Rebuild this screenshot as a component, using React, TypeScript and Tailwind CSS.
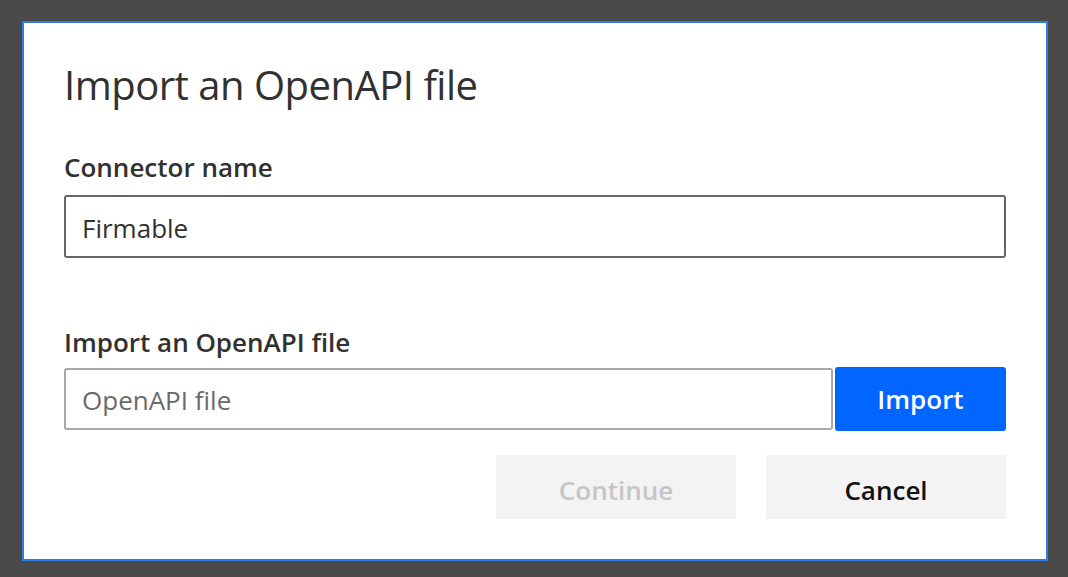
export default function App() {
  return (
    <div
      className="w-[1068px] h-[577px] bg-[#4a4a4a] pt-[21px] pl-[22px] overflow-hidden"
      style={{ fontFamily: '"Open Sans", "Noto Sans", Arial, sans-serif' }}
    >
      <div className="w-[1026px] h-[540px] bg-white border-2 border-[#2b7de9] px-[40px] flex flex-col">
        <h1 className="mt-[38px] text-[40px] leading-[48px] font-normal text-[#323130] tracking-[-0.5px]">
          Import an OpenAPI file
        </h1>

        <label className="mt-[42px] text-[26px] leading-[32px] font-semibold text-[#323130]">
          Connector name
        </label>
        <div className="mt-[12px] h-[63px] border-2 border-[#666666] rounded-[3px] flex items-center pl-[16px] pt-[3px] text-[26px] text-[#323130]">
          Firmable
        </div>

        <label className="mt-[68px] text-[26px] leading-[32px] font-semibold text-[#323130]">
          Import an OpenAPI file
        </label>
        <div className="mt-[9px] h-[64px] flex items-center gap-[2px]">
          <div className="flex-1 h-[62px] border-2 border-[#a8a8a8] rounded-[3px] flex items-center pl-[16px] pt-[3px] text-[26px] text-[#6b6a69]">
            OpenAPI file
          </div>
          <button className="w-[171px] h-[64px] bg-[#0066ff] rounded-[3px] text-white text-[26px] font-semibold">
            Import
          </button>
        </div>

        <div className="mt-[24px] flex justify-end gap-[30px]">
          <button className="w-[240px] h-[64px] pt-[6px] bg-[#f3f3f3] text-[#c6c6c6] text-[26px] font-semibold">
            Continue
          </button>
          <button className="w-[240px] h-[64px] pt-[6px] bg-[#f3f3f3] text-[#111111] text-[26px] font-semibold">
            Cancel
          </button>
        </div>
      </div>
    </div>
  );
}
